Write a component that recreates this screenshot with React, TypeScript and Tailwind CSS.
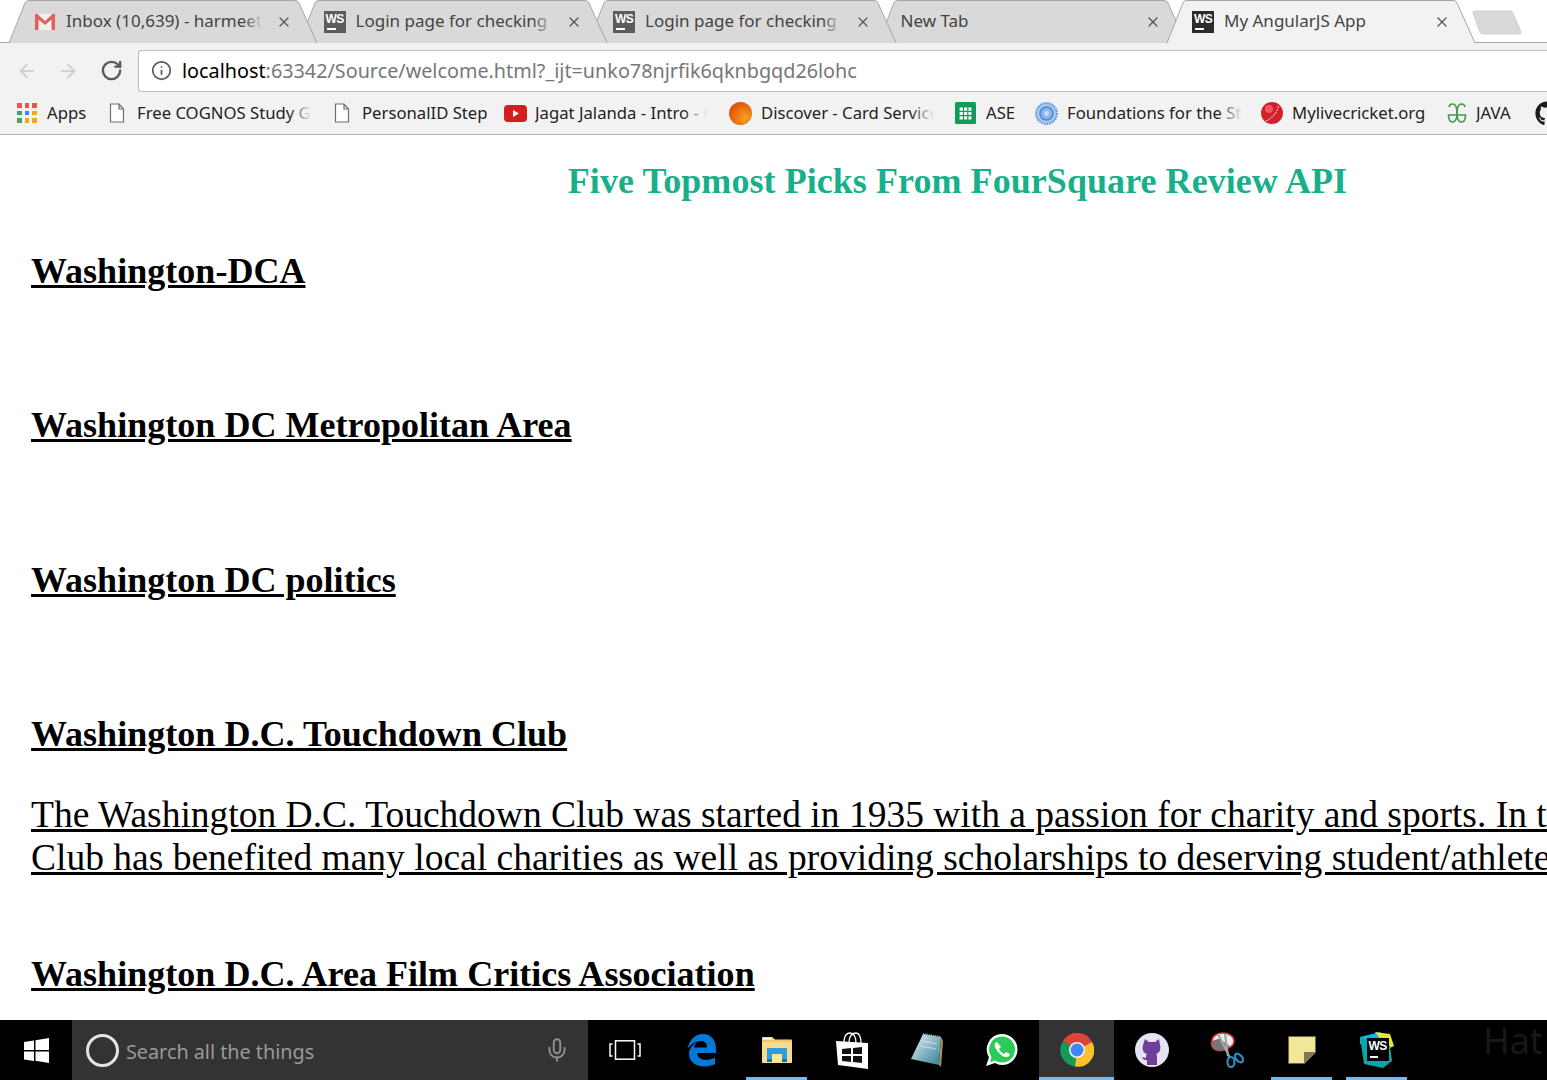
import React from "react";
import { ArrowLeft, ArrowRight, RotateCw, Info, Mic, X } from "lucide-react";
import { FaGithub } from "react-icons/fa";

const uiFont = "font-['Noto_Sans','Open_Sans',sans-serif]";

function WsIcon({ dark = false }: { dark?: boolean }) {
  return (
    <div className={`relative h-[22px] w-[22px] shrink-0 ${dark ? "bg-[#2b2b2b]" : "bg-[#5c5c5c]"}`}>
      <span className="absolute left-[2px] top-[2px] font-['Liberation_Sans',sans-serif] text-[12px] font-bold leading-[12px] tracking-[-0.5px] text-white">WS</span>
      <div className="absolute bottom-[3px] left-[3px] h-[2px] w-[9px] bg-white" />
    </div>
  );
}

function GmailIcon() {
  return (
    <svg width="22" height="18" viewBox="0 0 22 18" className="shrink-0">
      <rect x="1" y="1" width="20" height="16" fill="#f1f1f1" />
      <path d="M1 17V1h2.500L11 8l7.500-7H21v16h-3.500V6.500L11 12 4.500 6.500V17z" fill="#e0605a" />
    </svg>
  );
}

function Tab({ title, icon, active, z, fade }: { title: string; icon?: React.ReactNode; active?: boolean; z: string; fade?: boolean }) {
  return (
    <div className={`relative -mr-[21.5px] h-[43px] w-[311px] shrink-0 ${z}`}>
      <svg className="absolute inset-0" width="311" height="43" viewBox="0 0 311 43">
        <path
          d="M1 43 L17 3 Q18 0.500 21 0.500 L287 0.500 Q290 0.500 291 3 L309 43"
          fill={active ? "#f2f2f2" : "#d9d9d9"}
          stroke="#a6a6a6"
          strokeWidth="1"
        />
      </svg>
      <div className="relative flex h-[43px] items-center pl-[26px]">
        {icon}
        <div className={`relative -mt-[2px] h-[26px] overflow-hidden whitespace-nowrap text-[17px] leading-[26px] text-[#444] ${uiFont} ${icon ? "ml-[10px] w-[197px]" : "-ml-[2px] w-[230px]"}`}>
          {title}
          {fade && <div className="absolute inset-y-0 right-0 w-[20px] bg-gradient-to-r from-transparent to-[#d9d9d9]" />}
        </div>
        <X className="absolute left-[268px] top-[14px] text-[#555]" size={16} strokeWidth={1.800} />
      </div>
    </div>
  );
}

function PageIcon() {
  return (
    <svg width="16" height="20" viewBox="0 0 16 20" className="shrink-0">
      <path d="M1.500 1h8.500l4.500 5v13h-13z M10 1v5h4.500" fill="#fff" stroke="#6e6e6e" strokeWidth="1.200" />
    </svg>
  );
}

function AppsIcon() {
  const colors = ["#ef5350", "#ef5350", "#ef5350", "#43a55b", "#2f8ff0", "#f4a910", "#43a55b", "#f4a910", "#f4a910"];
  return (
    <div className="grid h-[20px] w-[20px] shrink-0 grid-cols-3 gap-[3px]">
      {colors.map((c, i) => (
        <span key={i} className="block h-[4.600px]" style={{ backgroundColor: c }} />
      ))}
    </div>
  );
}

function Bookmark({ icon, text, w, ml, fade }: { icon: React.ReactNode; text: string; w: string; ml: string; fade?: boolean }) {
  return (
    <div className={`flex items-center ${ml}`}>
      {icon}
      <div className={`relative h-[26px] overflow-hidden whitespace-nowrap text-[16.700px] leading-[26px] text-[#222] ${uiFont} ${w}`}>
        {text}
        {fade && <div className="absolute inset-y-0 right-0 w-[24px] bg-gradient-to-r from-transparent to-[#f2f2f2]" />}
      </div>
    </div>
  );
}

function TaskItem({ children, active, line, wide }: { children: React.ReactNode; active?: boolean; line?: boolean; wide?: boolean }) {
  return (
    <div className={`relative flex h-[60px] shrink-0 items-center justify-center ${wide ? "w-[76px] pr-[3px]" : "w-[75px]"} ${active ? "bg-[#333]" : ""}`}>
      {children}
      {line && <div className="absolute inset-x-[7px] bottom-0 h-[3px] bg-[#76b9ed]" />}
      {active && <div className="absolute inset-x-0 bottom-0 h-[3px] bg-[#76b9ed]" />}
    </div>
  );
}

function H({ children }: { children: React.ReactNode }) {
  return <h2 className="mb-[38px] whitespace-nowrap text-[36px] font-bold leading-[41px] tracking-[0.03px] text-black underline">{children}</h2>;
}

export default function App() {
  return (
    <div className="flex h-[1080px] w-[1547px] flex-col overflow-hidden bg-white">
      {/* tab strip */}
      <div className="relative h-[43px] shrink-0 border-b border-[#a6a6a6] pl-[8px]">
        <div className="flex">
          <Tab z="z-40" title="Inbox (10,639) - harmeet" fade icon={<GmailIcon />} />
          <Tab z="z-30" title="Login page for checking and" fade icon={<WsIcon />} />
          <Tab z="z-20" title="Login page for checking and" fade icon={<WsIcon />} />
          <Tab z="z-10" title="New Tab" />
          <Tab z="z-50" active title="My AngularJS App" icon={<WsIcon dark />} />
          <div className="relative z-0 ml-[16px] mt-[10px] h-[25px] w-[50px] shrink-0">
            <svg width="50" height="25" viewBox="0 0 50 25">
              <path d="M2 1 H38 Q40 1 41 3 L49 22 Q49.500 24 47 24 H11 Q9 24 8 22 L1 3 Q1 1 2 1 Z" fill="#d9d9d9" stroke="#cfcfcf" />
            </svg>
          </div>
        </div>
      </div>

      {/* toolbar */}
      <div className="flex h-[49px] shrink-0 items-center bg-[#f2f2f2] pt-[6px]">
        <div className="flex w-[138px] shrink-0 items-center pl-[16px] text-[#c9c9c9]">
          <ArrowLeft size={22} strokeWidth={1.800} />
          <ArrowRight size={22} strokeWidth={1.800} className="ml-[19px]" />
          <RotateCw size={23} strokeWidth={2.500} className="ml-[21px] text-[#5a5a5a]" />
        </div>
        <div className="flex h-[42px] flex-1 items-center rounded-l-[3px] border border-r-0 border-[#bcbcbc] bg-white pl-[12px]">
          <Info size={21} strokeWidth={2} className="shrink-0 text-[#5a5a5a]" />
          <div className={`ml-[10px] whitespace-nowrap text-[19.800px] text-[#777] ${uiFont}`}>
            <span className="text-black">localhost</span>:63342/Source/welcome.html?_ijt=unko78njrfik6qknbgqd26lohc
          </div>
        </div>
      </div>

      {/* bookmarks */}
      <div className="flex h-[43px] shrink-0 items-center overflow-hidden border-b border-[#b5b5b5] bg-[#f2f2f2] pl-[17px]">
        <Bookmark ml="" w="ml-[10px] w-[42px]" text="Apps" icon={<AppsIcon />} />
        <Bookmark ml="ml-[20px]" w="ml-[12px] w-[175px]" text="Free COGNOS Study Guide" fade icon={<PageIcon />} />
        <Bookmark ml="ml-[22px]" w="ml-[12px] w-[125px]" text="PersonalID Step" icon={<PageIcon />} />
        <Bookmark
          ml="ml-[17px]"
          w="ml-[8px] w-[172px]"
          text="Jagat Jalanda - Intro - Part"
          fade
          icon={
            <svg width="23" height="17" viewBox="0 0 23 17" className="shrink-0">
              <rect width="23" height="17" rx="4" fill="#d11f1f" />
              <path d="M9 5l6 3.500-6 3.500z" fill="#fff" />
            </svg>
          }
        />
        <Bookmark
          ml="ml-[22px]"
          w="ml-[9px] w-[173px]"
          text="Discover - Card Services"
          fade
          icon={
            <svg width="23" height="23" viewBox="0 0 23 23" className="shrink-0">
              <defs>
                <radialGradient id="disc" cx="0.700" cy="0.700" r="0.800">
                  <stop offset="0" stopColor="#f9a11b" />
                  <stop offset="1" stopColor="#dc4a0c" />
                </radialGradient>
              </defs>
              <circle cx="11.500" cy="11.500" r="11.500" fill="url(#disc)" />
            </svg>
          }
        />
        <Bookmark
          ml="ml-[21px]"
          w="ml-[10px] w-[31px]"
          text="ASE"
          icon={
            <svg width="21" height="22" viewBox="0 0 21 22" className="shrink-0">
              <rect width="21" height="22" rx="1.500" fill="#0f9d58" />
              <path d="M4 5h13v13H4z M4 9.300h13 M4 13.600h13 M8.500 5v13 M12.800 5v13" fill="#fff" stroke="#0f9d58" strokeWidth="1.200" />
            </svg>
          }
        />
        <Bookmark
          ml="ml-[18px]"
          w="ml-[9px] w-[175px]"
          text="Foundations for the Study"
          fade
          icon={
            <svg width="23" height="23" viewBox="0 0 23 23" className="shrink-0">
              <circle cx="11.500" cy="11.500" r="10.500" fill="#a9c8f0" stroke="#5b93dd" strokeWidth="2" strokeDasharray="1.500 1" />
              <circle cx="11.500" cy="11.500" r="6.500" fill="#8ab4ea" stroke="#4a86d8" strokeWidth="1.500" />
              <circle cx="11.500" cy="11.500" r="2.500" fill="#c8dcf6" />
            </svg>
          }
        />
        <Bookmark
          ml="ml-[19px]"
          w="ml-[9px] w-[135px]"
          text="Mylivecricket.org"
          icon={
            <svg width="22" height="24" viewBox="0 0 22 24" className="shrink-0">
              <circle cx="11" cy="12" r="11" fill="#d3202a" />
              <path d="M5 20Q15 15 18 4" fill="none" stroke="#f7b7b7" strokeWidth="1.200" strokeDasharray="2 1" />
              <circle cx="8" cy="8" r="4" fill="#ea5a5f" />
            </svg>
          }
        />
        <Bookmark
          ml="ml-[20px]"
          w="ml-[9px] w-[40px]"
          text="JAVA"
          icon={
            <svg width="20" height="22" viewBox="0 0 20 22" className="shrink-0" fill="none" stroke="#3f9a4a" strokeWidth="1.600">
              <path d="M10 13H1.500c0 4 1.500 7 4 7 3 0 4.500-3 4.500-9s-1.500-9-4.500-9C3.500 2 2.300 3.500 2 5" />
              <path d="M10 13h8.500c0 4-1.500 7-4 7-3 0-4.500-3-4.500-9s1.500-9 4.500-9c2 0 3.200 1.500 3.500 3" />
            </svg>
          }
        />
        <FaGithub size={25} className="ml-[19px] shrink-0 text-[#1b1b1b]" />
      </div>

      {/* page */}
      <div className="min-h-0 flex-1 overflow-hidden font-['Liberation_Serif',serif]">
        <div className="w-[1915px] pl-[31px]">
          <h1 className="-ml-[31px] mb-[49px] mt-[26px] text-center text-[36px] font-bold leading-[41px] tracking-[0.06px] text-[#1aaf8b]">
            Five Topmost Picks From FourSquare Review API
          </h1>
          <div className="pb-[75.3px]"><H>Washington-DCA</H></div>
          <div className="pb-[75.3px]"><H>Washington DC Metropolitan Area</H></div>
          <div className="pb-[75.3px]"><H>Washington DC politics</H></div>
          <div className="pb-[75.5px]">
            <H>Washington D.C. Touchdown Club</H>
            <p className="whitespace-nowrap text-[37.500px] leading-[43px] text-black underline">
              The Washington D.C. Touchdown Club was started in 1935 with a passion for charity and sports. In the
              <br />
              Club has benefited many local charities as well as providing scholarships to deserving student/athletes.
            </p>
          </div>
          <H>Washington D.C. Area Film Critics Association</H>
        </div>
      </div>

      {/* taskbar */}
      <div className="flex h-[60px] shrink-0 items-center bg-black">
        <div className="flex h-[60px] w-[72px] shrink-0 items-center justify-center">
          <svg width="25" height="25" viewBox="0 0 25 25" fill="#fff">
            <path d="M0 4l10-1.500V12H0z M11.500 2.300L25 0v12H11.500z M0 13.500h10V23L0 21.500z M11.500 13.500H25V25l-13.500-2.300z" />
          </svg>
        </div>
        <div className={`flex h-[60px] w-[516px] shrink-0 items-center bg-[#333] pl-[14px] ${uiFont}`}>
          <div className="h-[33px] w-[33px] shrink-0 rounded-full border-[3px] border-[#e4e4e4]" />
          <span className="ml-[7px] pt-[3px] text-[19.800px] text-[#9a9a9a]">Search all the things</span>
          <Mic size={26} strokeWidth={1.800} className="ml-auto mr-[18px] text-[#8f8f8f]" />
        </div>
        <TaskItem wide>
          <svg width="32" height="20" viewBox="0 0 32 20" fill="none" stroke="#fff" strokeWidth="1.500">
            <rect x="6.500" y="0.800" width="19" height="18.400" />
            <path d="M3.500 4H1v12h2.500 M28.500 4H31v12h-2.500" />
          </svg>
        </TaskItem>
        <TaskItem>
          <svg width="30" height="34" viewBox="0 0 30 34" fill="#0078d7">
            <path d="M16 1C25 1 30 8 29 20H10c.500 7 11 9 18 4.500V31c-9 5-26 3-26-10.500 0-4 3-8.500 8-11.500-1.500 1.500-2.500 3.500-3 5.500h13c0-4-2-6.500-6-6.500-5 0-10 3-13.500 7.500C2.500 7 8 1 16 1z" />
          </svg>
        </TaskItem>
        <TaskItem line>
          <svg width="32" height="30" viewBox="0 0 32 30">
            <path d="M1 3q0-1 1-1h9l3 2.500h16q1 0 1 1V28H1z" fill="#f8dc8b" />
            <path d="M2 3h8v1.500H2z" fill="#fff" />
            <path d="M1 6h30" stroke="#e4b44c" strokeWidth="1" />
            <path d="M6 24V13h20v11h-5v-5H11v5z" fill="#2b9fe0" />
            <path d="M6 24h5v3H6z M21 24h5v3h-5z" fill="#0b74b8" />
            <rect x="11" y="19" width="10" height="8" fill="#fde69b" />
          </svg>
        </TaskItem>
        <TaskItem>
          <svg width="32" height="37" viewBox="0 0 32 37">
            <path d="M8 11C8 3 11 1 14 1s6 3 6 11 M13 11C13 3 17 1 20 1s5 3 5 11" fill="none" stroke="#fff" strokeWidth="1.300" />
            <path d="M0 9l32 2v26L2 33z" fill="#fff" />
            <path d="M6 17l9-1v6H6z M17 16l9-1v7h-9z M6 24h9v6l-9-1z M17 24h9v7l-9-1z" fill="#111" />
          </svg>
        </TaskItem>
        <TaskItem>
          <svg width="34" height="34" viewBox="0 0 34 34">
            <defs>
              <linearGradient id="note" x1="0" y1="0" x2="1" y2="1">
                <stop offset="0" stopColor="#e6f3f5" />
                <stop offset="1" stopColor="#2c7f96" />
              </linearGradient>
            </defs>
            <path d="M13 1l18 3-2 28-28-6z" fill="url(#note)" />
            <path d="M31 4l2 4-2 26-2-2z" fill="#a8935f" />
            <path d="M13 1l18 3" stroke="#9aa7ad" strokeWidth="2" strokeDasharray="1 1" />
            <path d="M12 8l15 3 M10 13l16 3" stroke="#fff" strokeOpacity="0.500" />
          </svg>
        </TaskItem>
        <TaskItem>
          <svg width="34" height="34" viewBox="0 0 34 34">
            <path d="M17 1a15.500 15.500 0 0 1 0 31c-3 0-5-.800-7-2l-9 3 3-8.500A15.500 15.500 0 0 1 17 1z" fill="#fff" />
            <path d="M17 3.500a13 13 0 0 1 0 26c-2.500 0-5-.800-7-2l-5 1.500 1.500-5A13 13 0 0 1 17 3.500z" fill="#2bcb57" />
            <path d="M12 9c-1 0-3 2-2 5s6 9 10 10c3 .500 5-1 5-3l-4-2-2 2c-2-1-4-3-5-5l2-2z" fill="#fff" />
          </svg>
        </TaskItem>
        <TaskItem active>
          <svg width="34" height="34" viewBox="0 0 34 34">
            <path d="M17 17L3 8A16.500 16.500 0 0 1 32 9z" fill="#db4437" />
            <path d="M17 17L3 8A16.500 16.500 0 0 0 15 33.500z" fill="#0f9d58" />
            <path d="M17 17L32 9A16.500 16.500 0 0 1 15 33.500z" fill="#fbc02d" />
            <circle cx="17" cy="17" r="8" fill="#f4f4f4" />
            <circle cx="17" cy="17" r="6.500" fill="#4285f4" />
          </svg>
        </TaskItem>
        <TaskItem>
          <svg width="34" height="34" viewBox="0 0 34 34">
            <circle cx="17" cy="17" r="17" fill="#e6e2f2" />
            <path d="M10 6l4 3h6l4-3 1 6c1 4 0 8-4 9 1 1 1 2 1 3v8h-10v-5c-3 .500-4-1-5-3 1 0 3 1 4 1 0-2 0-3 1-4-4-1-5-5-4-9z" fill="#6e3f97" />
          </svg>
        </TaskItem>
        <TaskItem>
          <svg width="36" height="36" viewBox="0 0 36 36" fill="none">
            <ellipse cx="14" cy="9" rx="11" ry="8" fill="#eee" stroke="#d33" strokeWidth="1.500" />
            <path d="M2 10c0 6 3 9 9 9s8-3 9-5L10 7z" fill="#777" stroke="#d33" strokeWidth="0.800" />
            <path d="M9 2l12 24 M16 2l3 22" stroke="#9aa" strokeWidth="2.200" />
            <ellipse cx="22" cy="30" rx="3.500" ry="5" stroke="#2a8fc8" strokeWidth="2.200" />
            <ellipse cx="30" cy="26" rx="3" ry="5" stroke="#2a8fc8" strokeWidth="2.200" transform="rotate(-40 30 26)" />
          </svg>
        </TaskItem>
        <TaskItem line>
          <svg width="28" height="28" viewBox="0 0 28 28">
            <path d="M0.500 0.500h27v16l-11 11h-16z" fill="#f3e59a" stroke="#6b6540" />
            <path d="M16 27.500V16h11.500z" fill="#7d7658" />
          </svg>
        </TaskItem>
        <TaskItem line>
          <div className="relative h-[36px] w-[36px]">
            <svg width="36" height="36" viewBox="0 0 36 36" className="absolute inset-0">
              <path d="M1 5l20-5 4 6-6 6H1z" fill="#14b3e8" />
              <path d="M16 0l15 2 4 12-6 3z" fill="#e4e92f" />
              <path d="M1 5l4 27 19 4 9-7-2-15z" fill="#0aa7a8" />
            </svg>
            <div className="absolute left-[8px] top-[6px] h-[23px] w-[22px] bg-black">
              <span className="absolute left-[2px] top-[2px] font-['Liberation_Sans',sans-serif] text-[12px] font-bold leading-[12px] tracking-[-0.5px] text-white">WS</span>
              <div className="absolute bottom-[3px] left-[3px] h-[2px] w-[8px] bg-white" />
            </div>
          </div>
        </TaskItem>
        <span className={`mb-[18px] ml-[69px] shrink-0 text-[36px] leading-[42px] text-[#181818] ${uiFont}`}>Hat</span>
      </div>
    </div>
  );
}
